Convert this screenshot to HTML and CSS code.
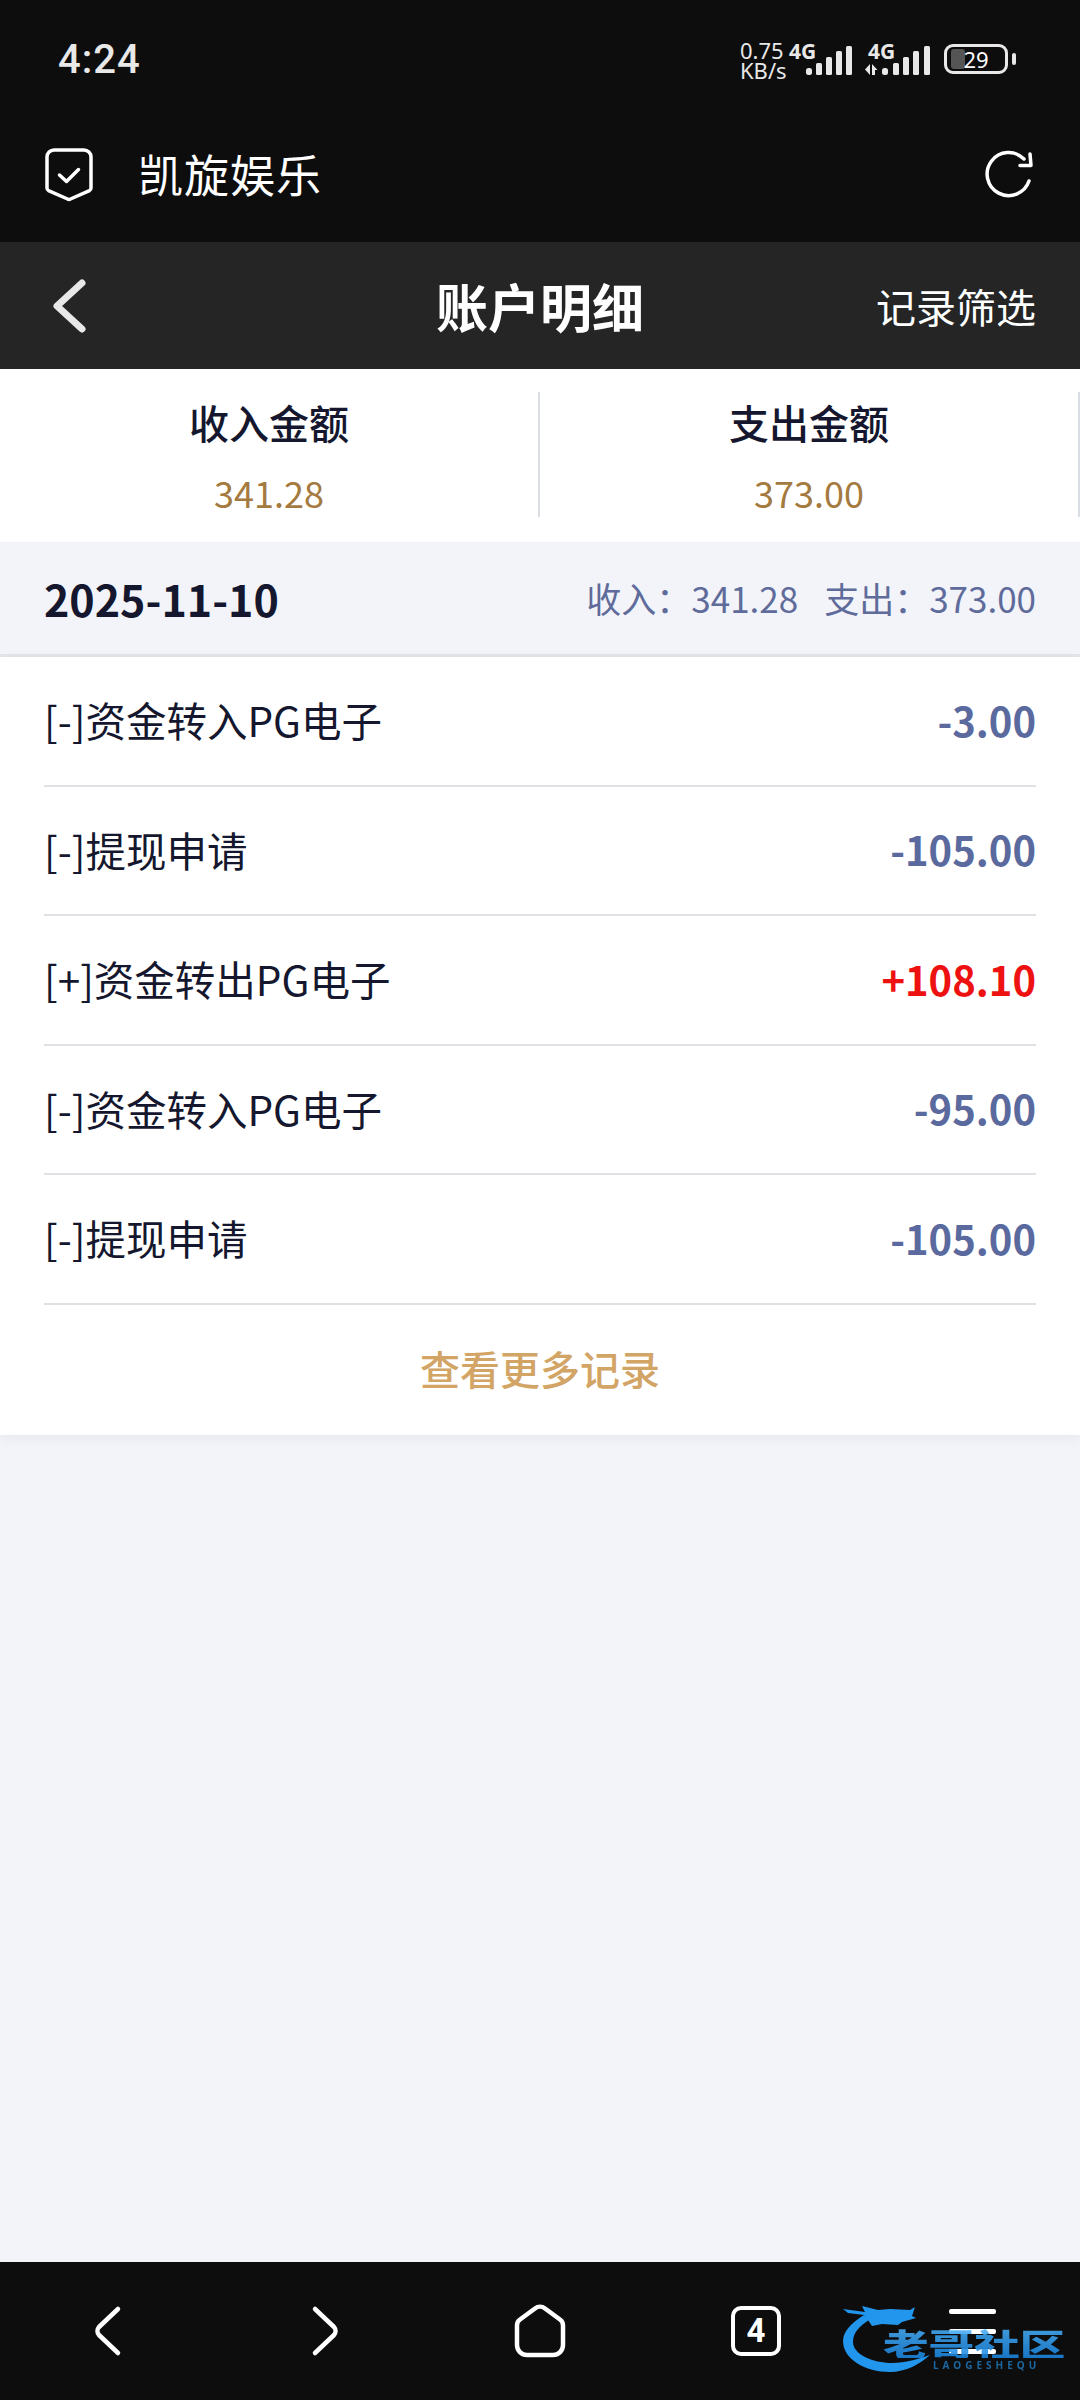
FILE: index.html
```html
<!DOCTYPE html>
<html lang="zh-CN">
<head>
    <meta charset="UTF-8">
    <title>账户明细</title>
    <link rel="stylesheet" href="styles.css">
</head>
<body>
<div class="status">
    <span class="time">4:24</span>
    <div class="status-right">
        <div class="speed">0.75<br>KB/s</div>
        <div class="sim">
            <b>4G</b>
            <svg width="46" height="29" viewBox="0 0 46 29"><g fill="#e8e8e8"><rect x="0" y="22" width="6" height="7" rx="2.500"/><rect x="10" y="17" width="6" height="12" rx="1.500"/><rect x="20" y="11" width="6" height="18" rx="1.500"/><rect x="30" y="5" width="6" height="24" rx="1.500"/><rect x="40" y="0" width="6" height="29" rx="1.500"/></g></svg>
        </div>
        <div class="sim sim2">
            <b>4G</b>
            <svg width="65" height="29" viewBox="0 0 65 29"><g fill="#e8e8e8"><path d="M5 18v11L0 23.500zM7 18l5.500 6H10v5H7z"/><rect x="17" y="22" width="6" height="7" rx="2.500"/><rect x="28" y="17" width="6" height="12" rx="1.500"/><rect x="38" y="11" width="6" height="18" rx="1.500"/><rect x="48" y="5" width="6" height="24" rx="1.500"/><rect x="59" y="0" width="6" height="29" rx="1.500"/></g></svg>
        </div>
        <div class="battery">
            <div class="battery-body"><i class="battery-level"></i><span>29</span></div>
            <i class="battery-tip"></i>
        </div>
    </div>
</div>

<div class="appbar">
    <svg class="shield" width="48" height="54" viewBox="0 0 48 54" fill="none" stroke="#fff" stroke-width="3.500" stroke-linecap="round" stroke-linejoin="round">
        <path d="M9 2h30a7 7 0 0 1 7 7v31a3 3 0 0 1-1.500 2.600L25.500 51a3 3 0 0 1-3 0L3.500 42.600A3 3 0 0 1 2 40V9a7 7 0 0 1 7-7z"/>
        <path d="M14.500 27l7 6.500 12-12"/>
    </svg>
    <span class="appname">凯旋娱乐</span>
    <svg class="reload" width="50" height="50" viewBox="0 0 50 50" fill="none" stroke="#fff" stroke-width="3.500" stroke-linecap="round" stroke-linejoin="round">
        <path d="M46 33A21.500 21.500 0 1 1 41 11"/>
        <path d="M47 6l1 11.500H37"/>
    </svg>
</div>

<div class="nav">
    <svg class="nav-back" width="36" height="56" viewBox="0 0 36 56" fill="none" stroke="#e8e8e8" stroke-width="7" stroke-linecap="round" stroke-linejoin="round"><path d="M31 5L6 28l25 23"/></svg>
    <h1>账户明细</h1>
    <span class="filter">记录筛选</span>
</div>

<div class="summary">
    <div class="sum-col">
        <div class="sum-label">收入金额</div>
        <div class="sum-value">341.28</div>
    </div>
    <div class="sum-col">
        <div class="sum-label">支出金额</div>
        <div class="sum-value">373.00</div>
    </div>
</div>

<div class="date-bar">
    <span class="date">2025-11-10</span>
    <div class="totals"><span>收入：341.28</span><span>支出：373.00</span></div>
</div>

<div class="list">
    <div class="row"><span>[-]资金转入PG电子</span><span class="amount">-3.00</span></div>
    <div class="row"><span>[-]提现申请</span><span class="amount">-105.00</span></div>
    <div class="row"><span>[+]资金转出PG电子</span><span class="amount plus">+108.10</span></div>
    <div class="row"><span>[-]资金转入PG电子</span><span class="amount">-95.00</span></div>
    <div class="row"><span>[-]提现申请</span><span class="amount">-105.00</span></div>
    <div class="more">查看更多记录</div>
</div>

<div class="spacer"></div>

<div class="bottom">
    <svg width="30" height="54" viewBox="0 0 30 54" fill="none" stroke="#fff" stroke-width="4.500" stroke-linecap="round" stroke-linejoin="round"><path d="M25 5L6 23a6 6 0 0 0 0 8l19 18"/></svg>
    <svg width="30" height="54" viewBox="0 0 30 54" fill="none" stroke="#fff" stroke-width="4.500" stroke-linecap="round" stroke-linejoin="round"><path d="M6 5l19 18a6 6 0 0 1 0 8L6 49"/></svg>
    <svg width="52" height="54" viewBox="0 0 52 54" fill="none" stroke="#fff" stroke-width="4.500" stroke-linecap="round" stroke-linejoin="round"><path d="M21 4.500a8 8 0 0 1 10 0l15 11a7 7 0 0 1 3 6V41a10 10 0 0 1-10 10H13A10 10 0 0 1 3 41V21.500a7 7 0 0 1 3-6z"/></svg>
    <div class="tabs">4</div>
    <div class="menu"><i></i><i></i><i></i></div>
    <div class="logo">
        <svg width="100" height="72" viewBox="0 0 100 72">
            <g fill="#2196ec">
                <path d="M24 11C10 20 3 28 3 37c0 18 22 31 47 31 16 0 30-8 40-17-12 4-24 8-38 8-20 0-39-9-39-21 0-10 7-16 16-22z"/>
                <path d="M3 5l22 3-3-6 16 4 12-1 20 1 5-3-3 9 4 2-14 4-4 3-16-1-10 2-4-6-4-5-16-2z"/>
            </g>
        </svg>
        <div class="logo-cn">老哥社区</div>
        <div class="logo-en">LAOGESHEQU</div>
    </div>
</div>
</body>
</html>
```

FILE: styles.css
```css
* {
    padding: 0;
    margin: 0;
    box-sizing: border-box;
}

body {
    width: 1080px;
    height: 2400px;
    display: flex;
    flex-direction: column;
    background: #f2f4f9;
    font-family: "Noto Sans CJK SC", "Noto Sans", sans-serif;
    color: #14172e;
}

/* status bar */
.status {
    height: 120px;
    flex: none;
    background: #0d0d0e;
    display: flex;
    justify-content: space-between;
    align-items: center;
    padding: 0 64px 2px 58px;
}

.time {
    font-family: Roboto, sans-serif;
    font-size: 40px;
    font-weight: 500;
    letter-spacing: 1px;
    color: #e8e8e8;
}

.status-right {
    display: flex;
    align-items: center;
    color: #e8e8e8;
}

.speed {
    width: 49px;
    margin-top: 2px;
    font-family: "Noto Sans", sans-serif;
    font-size: 22px;
    line-height: 20px;
}

.sim {
    position: relative;
    width: 63px;
    height: 32px;
    display: flex;
    align-items: flex-end;
    justify-content: flex-end;
}

.sim b {
    position: absolute;
    left: 0;
    top: -3px;
    font-family: "Noto Sans", sans-serif;
    font-size: 21px;
    line-height: 22px;
}

.sim2 {
    width: 65px;
    margin-left: 13px;
}

.sim2 b {
    left: 3px;
}

.battery {
    display: flex;
    align-items: center;
    gap: 4px;
    margin-left: 14px;
}

.battery-body {
    position: relative;
    width: 64px;
    height: 30px;
    border: 3px solid #e8e8e8;
    border-radius: 9px;
    text-align: center;
}

.battery-level {
    position: absolute;
    left: 4px;
    top: 2px;
    width: 14px;
    height: 20px;
    border-radius: 3px;
    background: #555;
}

.battery-body span {
    position: relative;
    display: block;
    font-family: "Noto Sans", sans-serif;
    font-size: 22px;
    line-height: 24px;
    color: #fff;
}

.battery-tip {
    width: 4px;
    height: 12px;
    border-radius: 2px;
    background: #e8e8e8;
}

/* browser bar */
.appbar {
    height: 122px;
    flex: none;
    background: #0d0d0e;
    display: flex;
    align-items: center;
    padding: 0 47px 16px 45px;
    color: #fff;
}

.shield {
    flex: none;
    margin-top: 4px;
}

.appname {
    margin-left: 45px;
    font-size: 45px;
    letter-spacing: 1px;
    flex: 1;
}

/* page title */
.nav {
    position: relative;
    height: 127px;
    flex: none;
    background: #252525;
    display: flex;
    align-items: center;
    justify-content: space-between;
    padding: 0 44px 0 51px;
    color: #fff;
}

.nav h1 {
    position: absolute;
    left: 0;
    right: 0;
    text-align: center;
    font-size: 52px;
    font-weight: 700;
}

.filter {
    font-size: 40px;
    position: relative;
}

/* summary */
.summary {
    height: 173px;
    flex: none;
    background: #fff;
    display: flex;
    padding-top: 23px;
}

.sum-col {
    width: 540px;
    height: 125px;
    padding-top: 2px;
    border-right: 2px solid #d9dde4;
    text-align: center;
}

.sum-label {
    font-size: 40px;
    font-weight: 500;
    line-height: 56px;
}

.sum-value {
    margin-top: 17px;
    font-size: 36px;
    line-height: 50px;
    color: #a47a3f;
}

.date-bar {
    height: 115px;
    flex: none;
    display: flex;
    justify-content: space-between;
    align-items: center;
    padding: 0 44px 1px;
    border-bottom: 3px solid #e2e4e8;
}

.date {
    font-size: 43px;
    font-weight: 700;
}

.totals {
    display: flex;
    gap: 26px;
    font-size: 35px;
    color: #5f6b9a;
}

/* records */
.list {
    background: #fff;
    padding: 0 44px;
    box-shadow: 0 4px 12px rgba(0, 0, 0, .05);
}

.row {
    height: 129.500px;
    display: flex;
    justify-content: space-between;
    align-items: center;
    padding-bottom: 2px;
    border-bottom: 2px solid #dfe1e5;
    font-size: 40.500px;
}

.amount {
    font-size: 40px;
    font-weight: 700;
    color: #5b6a9e;
}

.plus {
    color: #ee1111;
}

.more {
    height: 130px;
    display: flex;
    align-items: center;
    justify-content: center;
    padding-bottom: 4px;
    font-size: 40px;
    font-weight: 500;
    color: #d2a566;
}

.spacer {
    flex: 1;
}

/* bottom bar */
.bottom {
    position: relative;
    height: 138px;
    flex: none;
    background: #0d0d0e;
    display: grid;
    grid-template-columns: repeat(5, 216px);
    align-items: center;
    justify-items: center;
}

.tabs {
    width: 50px;
    height: 50px;
    border: 4px solid #fff;
    border-radius: 10px;
    color: #fff;
    font-family: Roboto, sans-serif;
    font-size: 33px;
    font-weight: 700;
    line-height: 42px;
    text-align: center;
}

.menu {
    width: 47px;
    height: 45px;
    display: flex;
    flex-direction: column;
    justify-content: space-between;
}

.menu i {
    height: 5px;
    border-radius: 2px;
    background: #fff;
}

/* watermark over the bar */
.logo {
    position: absolute;
    left: 840px;
    top: 42px;
    width: 225px;
    height: 74px;
    filter: blur(.5px);
}

.logo svg {
    position: absolute;
    left: 0;
    top: 0;
}

.logo-cn {
    position: absolute;
    left: 43px;
    top: 23px;
    font-size: 31px;
    font-weight: 900;
    line-height: 31px;
    white-space: nowrap;
    transform: scaleX(1.47);
    transform-origin: left center;
    background: linear-gradient(#4ab0f8, #1b86e0);
    -webkit-background-clip: text;
    background-clip: text;
    color: transparent;
    opacity: .88;
}

.logo-en {
    position: absolute;
    left: 93px;
    top: 55px;
    font-family: "Noto Sans", sans-serif;
    font-size: 10px;
    font-weight: 700;
    line-height: 12px;
    letter-spacing: 4px;
    white-space: nowrap;
    color: #1c679f;
}
```
